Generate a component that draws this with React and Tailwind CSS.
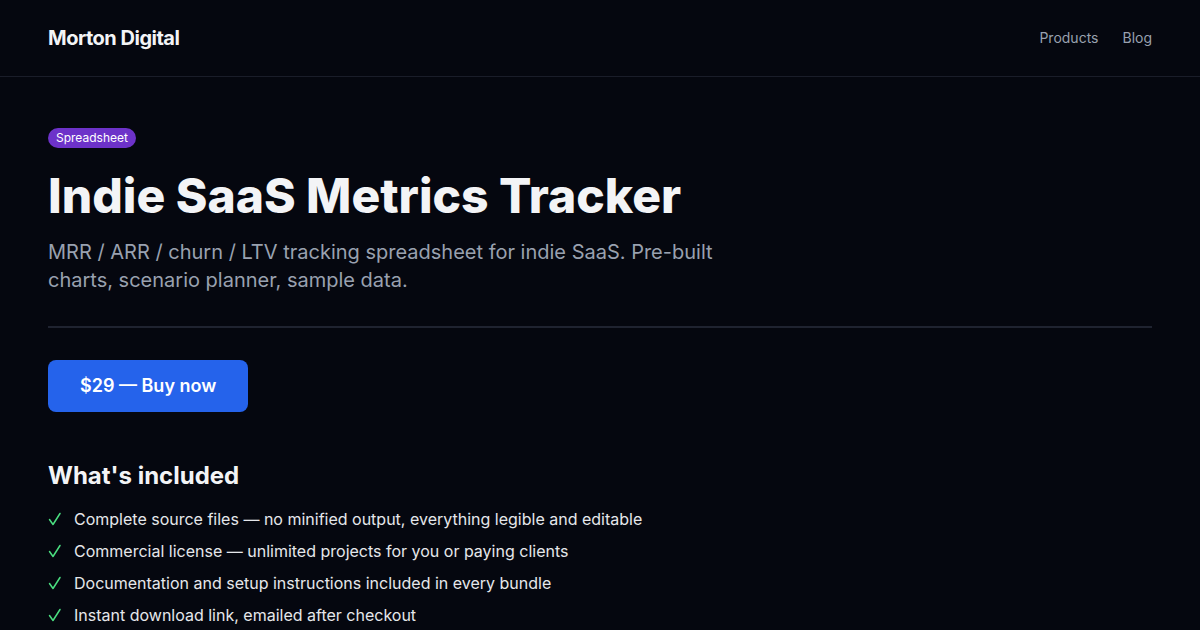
import React from "react";

const items = [
  "Complete source files — no minified output, everything legible and editable",
  "Commercial license — unlimited projects for you or paying clients",
  "Documentation and setup instructions included in every bundle",
  "Instant download link, emailed after checkout",
];

function Check() {
  return (
    <svg width="14" height="14" viewBox="0 0 14 14" className="shrink-0" fill="none">
      <path d="M1.5 7.5 L5 12.5 L12 1.5" stroke="#4ade80" strokeWidth="1.5" strokeLinecap="round" strokeLinejoin="round" />
    </svg>
  );
}

export default function App() {
  return (
    <div className="bg-[#05070f] text-gray-100 font-['Inter',sans-serif] overflow-hidden h-[630px]">
      <header className="h-[77px] border-b border-[#1a1d29] px-12 flex items-center justify-between">
        <div className="text-xl font-bold tracking-tight text-gray-100">Morton Digital</div>
        <nav className="flex items-center gap-6 text-sm text-gray-400">
          <span>Products</span>
          <span>Blog</span>
        </nav>
      </header>
      <main className="px-12 pt-[51px]">
        <div className="flex">
          <span className="rounded-full bg-[#6d32c9] px-2 py-0.5 text-xs text-white leading-4">Spreadsheet</span>
        </div>
        <h1 className="mt-6 text-5xl leading-none font-extrabold text-gray-100">Indie SaaS Metrics Tracker</h1>
        <p className="mt-[18px] max-w-2xl text-xl leading-7 text-gray-400">
          MRR / ARR / churn / LTV tracking spreadsheet for indie SaaS. Pre-built charts, scenario planner, sample data.
        </p>
        <hr className="mt-8 border-0 border-t-2 border-[#1f2330]" />
        <button className="mt-8 rounded-lg bg-[#2563eb] px-8 py-3 text-lg leading-7 font-semibold text-white">
          $29 — Buy now
        </button>
        <h2 className="mt-12 text-2xl leading-8 font-bold text-gray-100">What's included</h2>
        <ul className="mt-[15px] flex flex-col gap-2">
          {items.map((t) => (
            <li key={t} className="flex items-center gap-3 text-base leading-6 text-gray-200">
              <Check />
              <span>{t}</span>
            </li>
          ))}
        </ul>
      </main>
    </div>
  );
}
